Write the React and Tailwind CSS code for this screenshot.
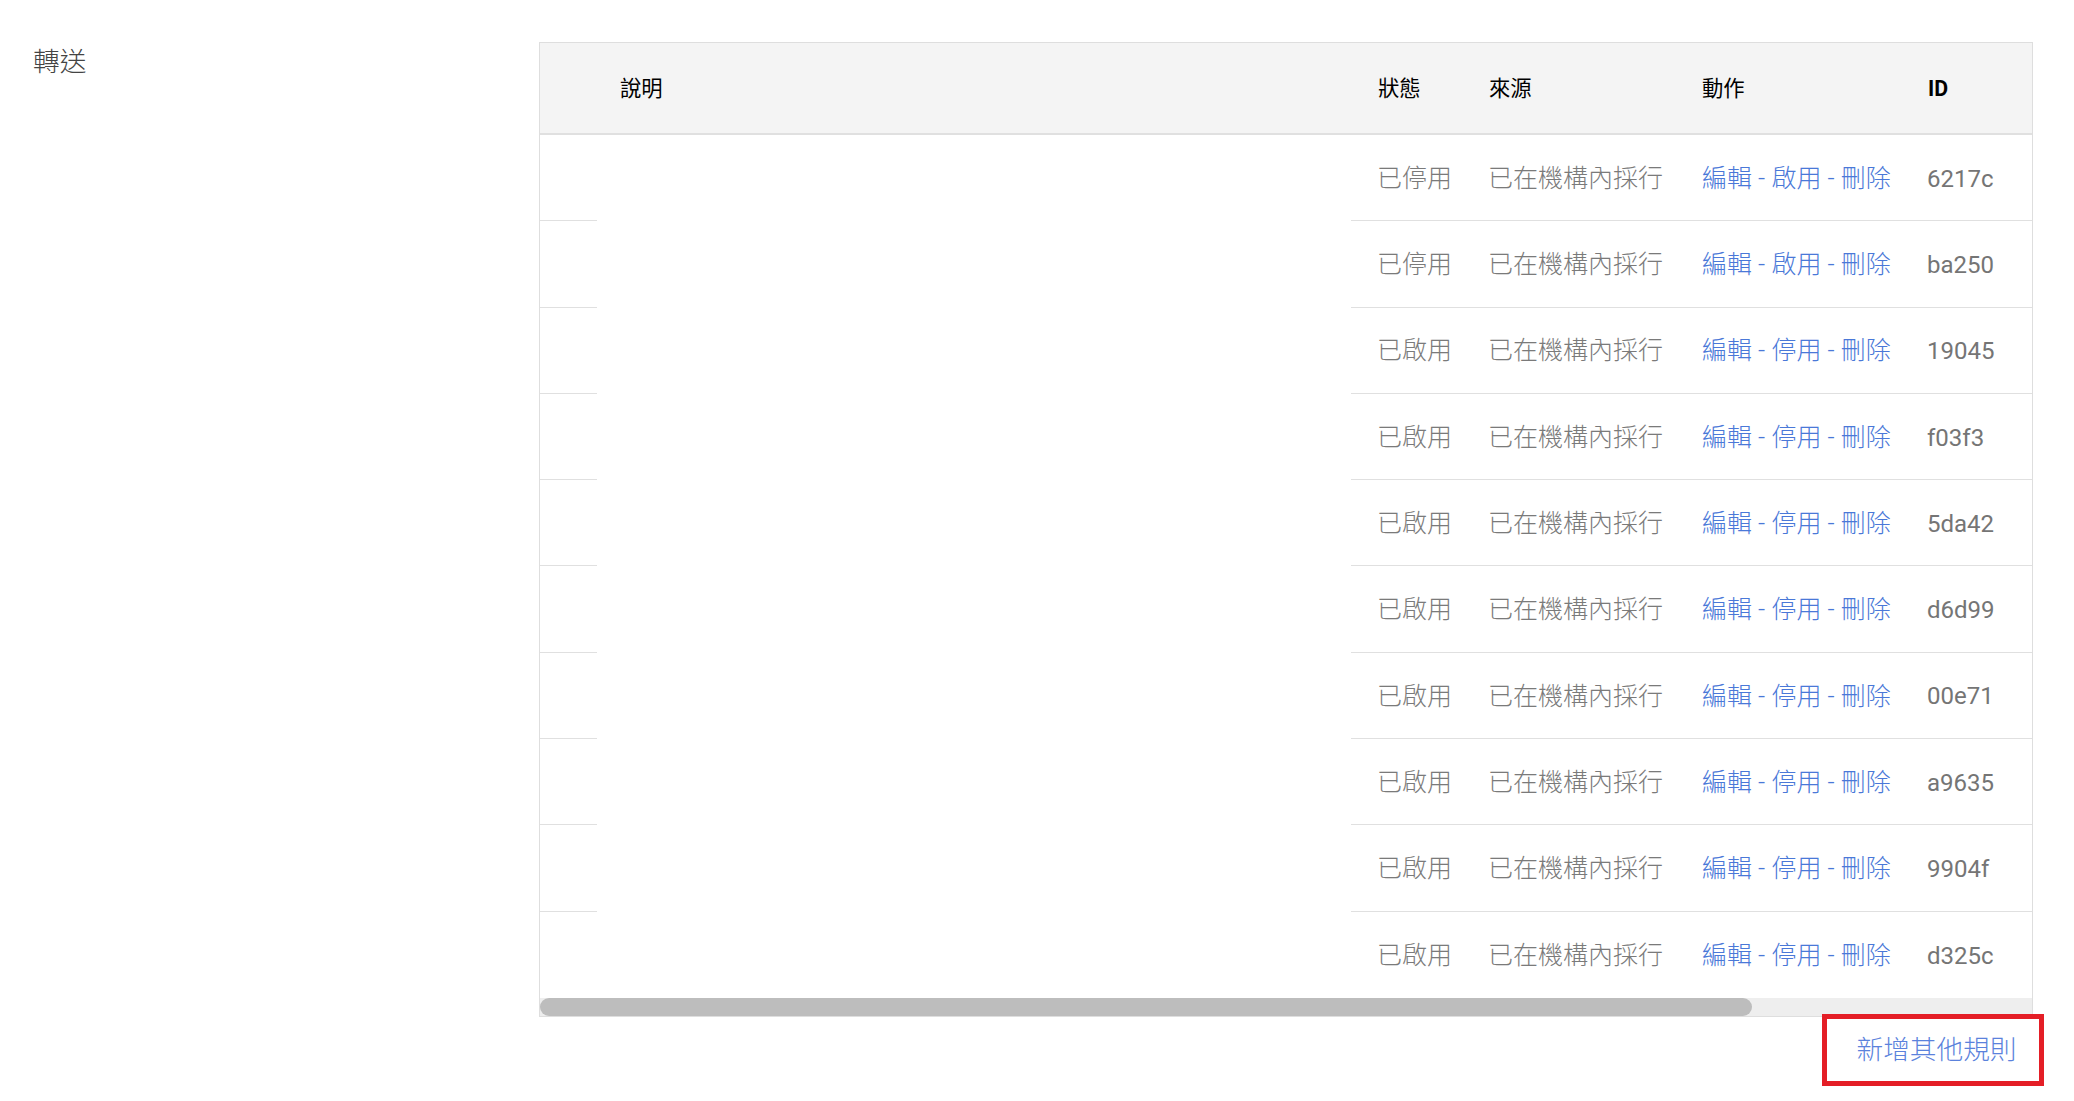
import React from "react";

const rows = [
  { id: "6217c", on: false },
  { id: "ba250", on: false },
  { id: "19045", on: true },
  { id: "f03f3", on: true },
  { id: "5da42", on: true },
  { id: "d6d99", on: true },
  { id: "00e71", on: true },
  { id: "a9635", on: true },
  { id: "9904f", on: true },
  { id: "d325c", on: true },
];

export default function App() {
  return (
    <div className="min-h-screen w-full bg-white flex pt-[42px] pl-[33px] font-['Roboto','Noto_Sans_CJK_TC',sans-serif]">
      <div className="w-[506px] shrink-0 text-[26.67px] leading-[40px] text-[#444444] font-light">轉送</div>
      <div className="flex flex-col w-[1505px] shrink-0">
        <div className="w-[1494px] border border-[#dedede]">
          <div className="flex h-[92px] pt-[2px] bg-[#f4f4f4] border-b-2 border-[#e0e0e0] items-center text-[21.33px] text-black">
            <div className="w-[57px] shrink-0" />
            <div className="w-[754px] shrink-0 pl-[23px]">說明</div>
            <div className="w-[114px] shrink-0 pl-[27px]">狀態</div>
            <div className="w-[213px] shrink-0 pl-[24px]">來源</div>
            <div className="w-[225px] shrink-0 pl-[24px]">動作</div>
            <div className="flex-1 pl-[25px] font-bold">ID</div>
          </div>
          {rows.map((r, i) => {
            const last = i === rows.length - 1;
            const b = last ? "" : "border-b border-[#e0e0e0]";
            return (
              <div key={r.id} className="flex h-[86.3px] pt-[2px] text-[25px] font-light text-[#7a7a7a]">
                <div className={`w-[57px] shrink-0 ${b}`} />
                <div className="w-[754px] shrink-0" />
                <div className={`w-[114px] shrink-0 pl-[26px] flex items-center ${b}`}>
                  {r.on ? "已啟用" : "已停用"}
                </div>
                <div className={`w-[213px] shrink-0 pl-[23px] flex items-center ${b}`}>已在機構內採行</div>
                <div className={`w-[225px] shrink-0 pl-[24px] flex items-center text-[#4a78d8] whitespace-pre ${b}`}>
                  <span>編輯</span>
                  <span> - </span>
                  <span>{r.on ? "停用" : "啟用"}</span>
                  <span> - </span>
                  <span>刪除</span>
                </div>
                <div className={`flex-1 pl-[24px] flex items-center text-[24px] font-normal text-[#757575] ${b}`}>{r.id}</div>
              </div>
            );
          })}
          <div className="h-[18px] bg-[#eeeeee] flex">
            <div className="w-[1212px] h-full rounded-full bg-[#bdbdbd]" />
          </div>
        </div>
        <div className="flex justify-end mt-[-3px]">
          <div className="w-[222px] h-[72px] border-[5px] border-[#e41e26] flex items-center justify-center pl-[7px] text-[26.67px] font-light text-[#5b82dc]">
            新增其他規則
          </div>
        </div>
      </div>
    </div>
  );
}
